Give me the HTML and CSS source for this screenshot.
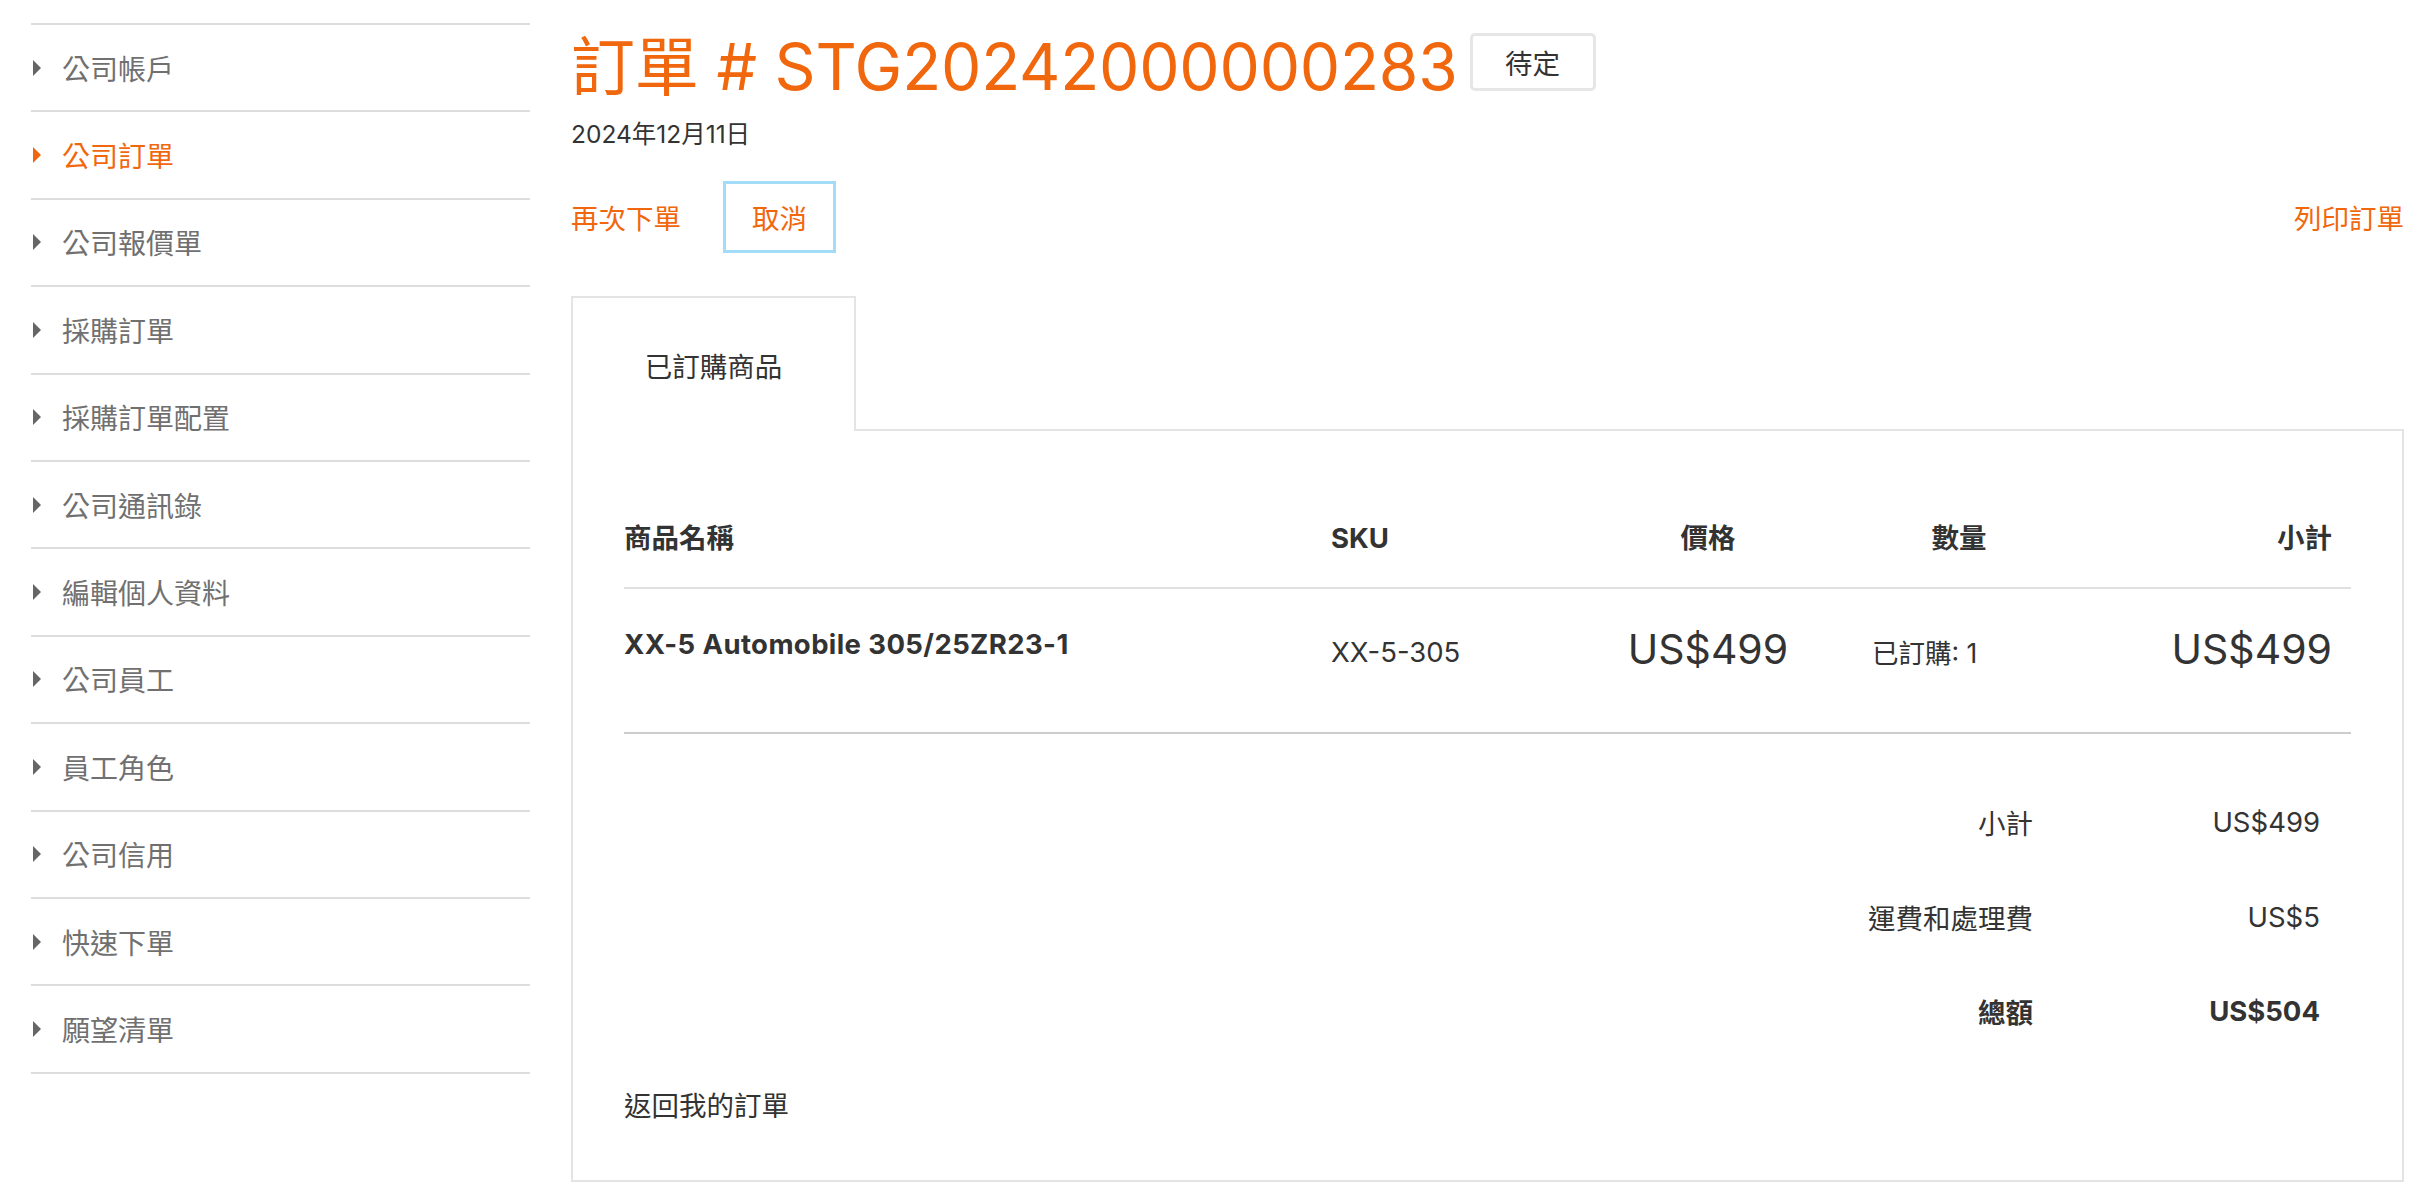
FILE: index.html
```html
<!DOCTYPE html>
<html lang="zh-Hant">
<head>
<meta charset="utf-8">
<title>訂單 # STG20242000000283</title>
<link rel="stylesheet" href="styles.css">
</head>
<body>
<div class="page">
  <aside class="sidebar">
    <ul class="nav">
      <li class="nav-item"><span class="caret"></span><span class="nav-label">公司帳戶</span></li>
      <li class="nav-item active"><span class="caret"></span><span class="nav-label">公司訂單</span></li>
      <li class="nav-item"><span class="caret"></span><span class="nav-label">公司報價單</span></li>
      <li class="nav-item"><span class="caret"></span><span class="nav-label">採購訂單</span></li>
      <li class="nav-item"><span class="caret"></span><span class="nav-label">採購訂單配置</span></li>
      <li class="nav-item"><span class="caret"></span><span class="nav-label">公司通訊錄</span></li>
      <li class="nav-item"><span class="caret"></span><span class="nav-label">編輯個人資料</span></li>
      <li class="nav-item"><span class="caret"></span><span class="nav-label">公司員工</span></li>
      <li class="nav-item"><span class="caret"></span><span class="nav-label">員工角色</span></li>
      <li class="nav-item"><span class="caret"></span><span class="nav-label">公司信用</span></li>
      <li class="nav-item"><span class="caret"></span><span class="nav-label">快速下單</span></li>
      <li class="nav-item"><span class="caret"></span><span class="nav-label">願望清單</span></li>
    </ul>
  </aside>

  <main class="main">
    <div class="title-row">
      <h1 class="title">訂單 # STG20242000000283</h1>
      <span class="badge">待定</span>
    </div>
    <div class="date">2024年12月11日</div>

    <div class="actions">
      <a class="action">再次下單</a>
      <a class="action cancel">取消</a>
      <span class="spacer"></span>
      <a class="action">列印訂單</a>
    </div>

    <div class="tabs">
      <div class="tab">已訂購商品</div>
    </div>

    <section class="panel">
      <table class="items">
        <colgroup>
          <col class="c-name">
          <col class="c-sku">
          <col class="c-price">
          <col class="c-qty">
          <col class="c-sub">
        </colgroup>
        <thead>
          <tr>
            <th class="h-name">商品名稱</th>
            <th class="h-sku">SKU</th>
            <th class="h-price">價格</th>
            <th class="h-qty">數量</th>
            <th class="h-sub">小計</th>
          </tr>
        </thead>
        <tbody>
          <tr>
            <td class="d-name">XX-5 Automobile 305/25ZR23-1</td>
            <td class="d-sku">XX-5-305</td>
            <td class="d-price">US$499</td>
            <td class="d-qty">已訂購: 1</td>
            <td class="d-sub">US$499</td>
          </tr>
        </tbody>
      </table>

      <div class="totals">
        <div class="t-label">小計</div><div class="t-value">US$499</div>
        <div class="t-label">運費和處理費</div><div class="t-value">US$5</div>
        <div class="t-label strong">總額</div><div class="t-value strong">US$504</div>
      </div>

      <a class="back">返回我的訂單</a>
    </section>
  </main>
</div>
</body>
</html>
```

FILE: styles.css
```css
* { box-sizing: border-box; }

html, body {
  margin: 0;
  padding: 0;
  background: #ffffff;
}

body {
  font-family: "Inter", "Noto Sans CJK TC", sans-serif;
  color: #333333;
  font-size: 27.5px;
}

.page {
  display: flex;
  gap: 41px;
  padding: 0 30px 0 31px;
}

/* Sidebar */
.sidebar {
  width: 499px;
  flex: none;
}

.nav {
  list-style: none;
  margin: 23px 0 0;
  padding: 0;
  border-top: 2px solid #dddddd;
}

.nav-item {
  display: flex;
  align-items: center;
  height: 87.4px;
  border-bottom: 2px solid #dddddd;
  color: #707070;
  font-family: "Noto Sans CJK TC", sans-serif;
  font-size: 28px;
}

.caret {
  width: 0;
  height: 0;
  margin-left: 2px;
  border-left: 8px solid #666666;
  border-top: 8px solid transparent;
  border-bottom: 8px solid transparent;
}

.nav-label {
  margin-left: 21px;
}

.nav-item.active { color: #f0670d; }
.nav-item.active .caret { border-left-color: #f0670d; }

/* Main */
.main {
  flex: 1;
  min-width: 0;
}

.title-row {
  display: flex;
  align-items: flex-start;
  margin-top: 29px;
}

.title {
  margin: 0;
  font-family: "Inter", "Noto Sans CJK TC", sans-serif;
  font-weight: 400;
  font-size: 64px;
  line-height: 76px;
  letter-spacing: -0.2px;
  color: #f0670d;
}

.badge {
  margin: 4px 0 0 12px;
  width: 126px;
  height: 58px;
  border: 3px solid #e6e6e6;
  border-radius: 5px;
  display: flex;
  align-items: center;
  justify-content: center;
  font-family: "Noto Sans CJK TC", sans-serif;
  font-size: 27.5px;
  color: #333333;
}

.date {
  margin-top: 13px;
  font-size: 24.5px;
  line-height: 32px;
  color: #333333;
}

.actions {
  display: flex;
  align-items: center;
  margin-top: 31px;
  height: 72px;
}

.action {
  color: #f0670d;
  font-family: "Noto Sans CJK TC", sans-serif;
  font-size: 27.5px;
  cursor: pointer;
}

.cancel {
  margin-left: 42px;
  width: 113px;
  height: 72px;
  border: 3px solid #a3dcf8;
  display: flex;
  align-items: center;
  justify-content: center;
}

.spacer { flex: 1; }

/* Tabs */
.tabs {
  display: flex;
  margin-top: 43px;
  position: relative;
  z-index: 1;
}

.tab {
  width: 285px;
  height: 135px;
  border: 2px solid #e4e4e4;
  border-bottom: none;
  background: #ffffff;
  display: flex;
  align-items: center;
  justify-content: center;
  font-family: "Noto Sans CJK TC", sans-serif;
  font-size: 27.5px;
  color: #333333;
  margin-bottom: -2px;
}

.panel {
  border: 2px solid #e4e4e4;
  padding: 58px 51px 58px 51px;
}

/* Items table */
.items {
  width: 100%;
  border-collapse: collapse;
  table-layout: fixed;
}

.c-name { width: 707px; }
.c-sku { width: 249px; }
.c-price { width: 256px; }
.c-qty { width: 246px; }
.c-sub { width: auto; }

.items th {
  font-weight: 700;
  font-size: 27.5px;
  line-height: 36px;
  padding: 31px 0 31px;
  border-bottom: 2px solid #e0e0e0;
  color: #333333;
}

.h-name, .h-sku { text-align: left; }
.h-price, .h-qty { text-align: center; }
.h-sub { text-align: right; padding-right: 19px !important; }

.items td {
  vertical-align: top;
  border-bottom: 2px solid #cccccc;
  padding: 0;
  height: 145px;
  color: #333333;
}

.d-name {
  font-weight: 700;
  font-size: 27.5px;
  line-height: 36px;
  letter-spacing: 0.4px;
  padding-top: 37px !important;
}

.d-sku {
  font-size: 27.5px;
  line-height: 36px;
  padding-top: 45px !important;
}

.d-price {
  font-size: 41px;
  line-height: 50px;
  padding-top: 35px !important;
  text-align: center;
}

.d-qty {
  font-size: 26.5px;
  line-height: 34px;
  padding-top: 47px !important;
  padding-left: 36px !important;
}

.d-sub {
  font-size: 41px;
  line-height: 50px;
  padding-top: 35px !important;
  text-align: right;
  padding-right: 19px !important;
}

/* Totals */
.totals {
  display: grid;
  grid-template-columns: 1fr 287px;
  grid-auto-rows: 94.5px;
  align-items: center;
  margin-top: 41px;
  padding-right: 31px;
}

.t-label {
  text-align: right;
  font-size: 27.5px;
}

.t-value {
  text-align: right;
  font-size: 27.5px;
}

.strong { font-weight: 700; }

.back {
  display: block;
  margin-top: 27px;
  font-size: 27.5px;
  line-height: 36px;
  color: #333333;
  font-family: "Noto Sans CJK TC", sans-serif;
  cursor: pointer;
}
```
